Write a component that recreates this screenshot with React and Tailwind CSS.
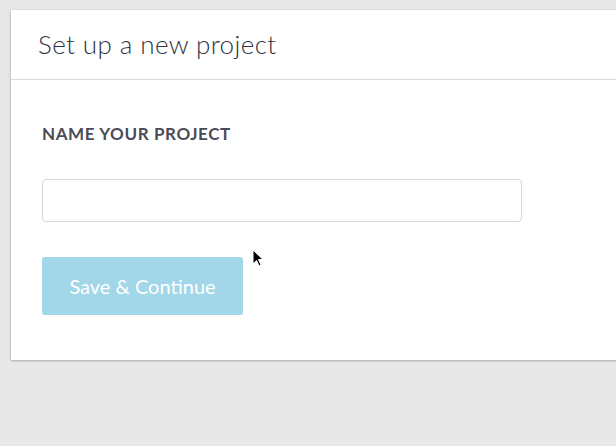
export default function App() {
  return (
    <div className="relative h-[446px] w-[616px] overflow-hidden bg-[#e7e8e7] pt-[10px] pl-[11px]" style={{ fontFamily: 'Lato, "Open Sans", sans-serif' }}>
      {/* Card */}
      <div className="w-[640px] bg-white shadow-[0_1px_2px_rgba(0,0,0,0.25),-1px_0_2px_rgba(0,0,0,0.08)]">
        <div className="flex h-[70px] items-center border-b border-[#d9d9d9] pl-[27px]">
          <h1 className="text-[26px] font-light tracking-[0.4px] text-[#2f3340]">Set up a new project</h1>
        </div>
        <div className="pl-[31px] pt-[44px] pb-[45px]">
          <label className="block text-[17px] font-bold leading-[20px] tracking-[0.6px] text-[#4a4b57]">NAME YOUR PROJECT</label>
          <input
            type="text"
            className="mt-[35px] block h-[43px] w-[480px] rounded-[4px] border border-[#d6d6d6] bg-white outline-none"
          />
          <button className="mt-[35px] flex h-[58px] w-[201px] items-center justify-center rounded-[3px] bg-[#a2d6e9] text-[20px] text-white">
            Save &amp; Continue
          </button>
        </div>
      </div>

      {/* Mouse cursor */}
      <svg className="absolute left-[252px] top-[249px]" width="13" height="19" viewBox="0 0 13 19">
        <path d="M1 1 L1 15 L4.5 11.5 L7 17 L9 16 L6.5 10.5 L11 10.5 Z" fill="#000" stroke="#fff" strokeWidth="1" />
      </svg>
    </div>
  )
}
